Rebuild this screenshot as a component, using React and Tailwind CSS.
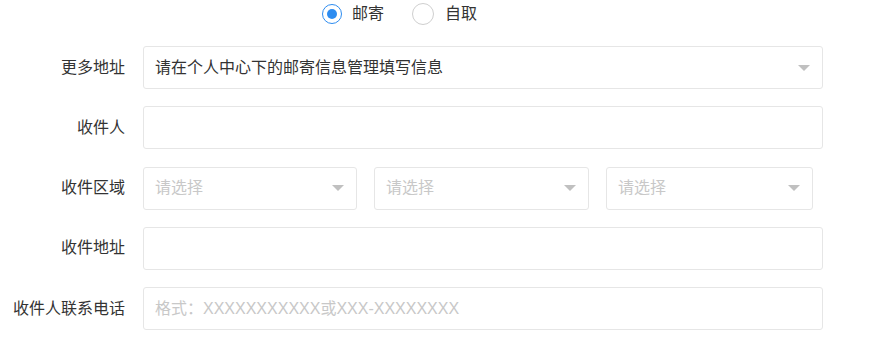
import React from "react";

const font = { fontFamily: '"Liberation Sans", "Noto Sans CJK SC", "Noto Sans", sans-serif' };

function Arrow() {
  return (
    <svg width="12" height="6" viewBox="0 0 12 6" className="shrink-0">
      <path d="M0 0 L12 0 L6 6 Z" fill="#c0c0c0" />
    </svg>
  );
}

function Row({ label, children }) {
  return (
    <div className="flex items-center h-[43px]">
      <div className="w-[125px] text-right text-[16px] text-[#333] leading-none shrink-0">{label}</div>
      <div className="ml-[18px] flex">{children}</div>
    </div>
  );
}

function Box({ w, children, className = "" }) {
  return (
    <div
      className={`h-[43px] border border-[#e6e6e6] rounded-[3px] bg-white flex items-center pl-[11px] pr-[12px] text-[16px] ${className}`}
      style={{ width: w }}
    >
      {children}
    </div>
  );
}

export default function App() {
  return (
    <div className="w-[874px] h-[342px] bg-white relative overflow-hidden" style={font}>
      <div className="h-[28px] flex items-center pl-[322px]">
        <div className="flex items-center">
          <span className="w-[20px] h-[20px] rounded-full border-[1.5px] border-[#2d8cf0] flex items-center justify-center">
            <span className="w-[10px] h-[10px] rounded-full bg-[#2d8cf0]" />
          </span>
          <span className="ml-[10px] text-[16px] text-[#333] leading-none">邮寄</span>
        </div>
        <div className="flex items-center ml-[28px]">
          <span className="w-[22px] h-[22px] rounded-full border-[1.5px] border-[#cfcfcf]" />
          <span className="ml-[11px] text-[16px] text-[#333] leading-none">自取</span>
        </div>
      </div>
      <div className="mt-[18px] flex flex-col gap-[17.3px]">
        <Row label="更多地址">
          <Box w="680px" className="justify-between">
            <span className="text-[#333]">请在个人中心下的邮寄信息管理填写信息</span>
            <Arrow />
          </Box>
        </Row>
        <Row label="收件人">
          <Box w="680px" />
        </Row>
        <Row label="收件区域">
          <div className="flex gap-[17px]">
            <Box w="214px" className="justify-between">
              <span className="text-[#c8c8c8]">请选择</span>
              <Arrow />
            </Box>
            <Box w="215px" className="justify-between">
              <span className="text-[#c8c8c8]">请选择</span>
              <Arrow />
            </Box>
            <Box w="207px" className="justify-between">
              <span className="text-[#c8c8c8]">请选择</span>
              <Arrow />
            </Box>
          </div>
        </Row>
        <Row label="收件地址">
          <Box w="680px" />
        </Row>
        <Row label="收件人联系电话">
          <Box w="680px">
            <span className="text-[#c8c8c8]">格式：XXXXXXXXXXX或XXX-XXXXXXXX</span>
          </Box>
        </Row>
      </div>
    </div>
  );
}
